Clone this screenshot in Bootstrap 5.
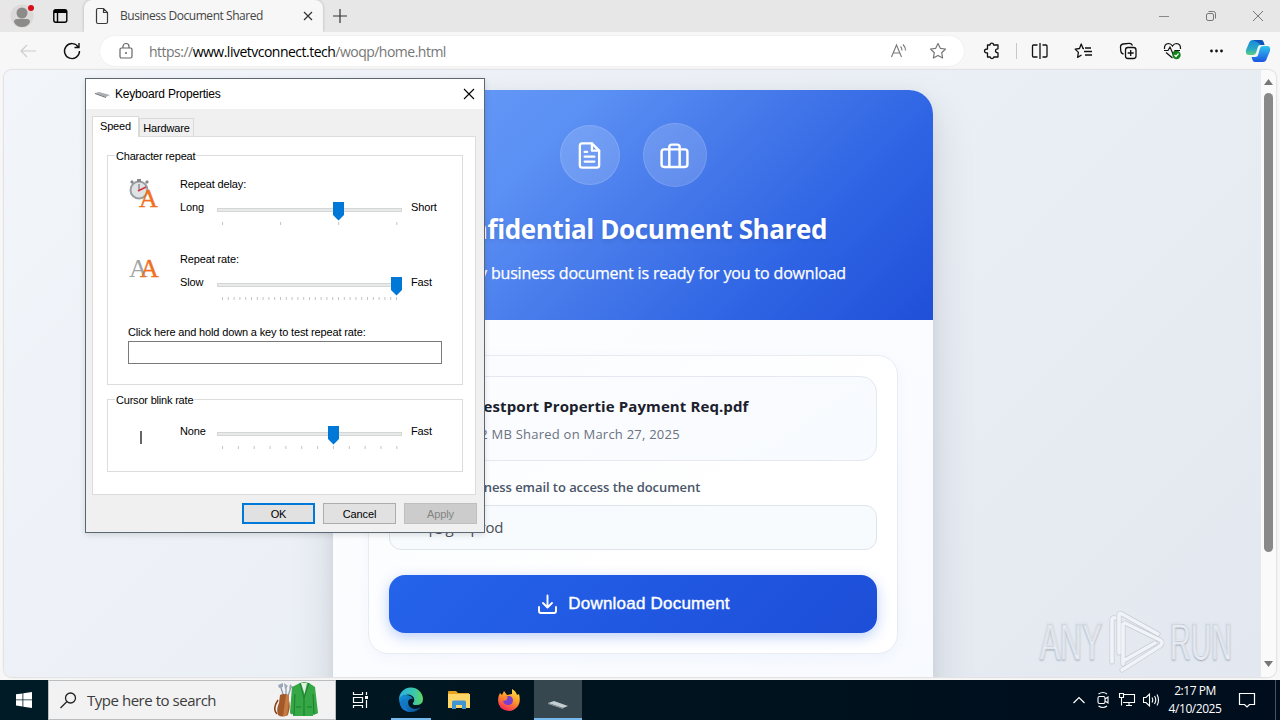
<!DOCTYPE html>
<html lang="en">

<head>
  <meta charset="UTF-8">
  <meta name="viewport" content="width=device-width, initial-scale=1.0">
  <title>Business Document Shared</title>
  <link rel="stylesheet" href="https://cdn.jsdelivr.net/npm/bootstrap@5.3.3/dist/css/bootstrap.min.css" />

  <style>
    body {
      width: 1280px;
      height: 720px;
      font-family: "Open Sans", "Noto Sans", sans-serif;
      background-color: #f7f7f7;
    }

    svg {
      display: block;
      flex: none;
    }

    /* browser chrome */
    .tab-strip {
      height: 32px;
      padding: 0 14px 0 9px;
      background-color: #e7e7e7;
    }

    .page-tab {
      width: 239px;
      height: 32px;
      margin-left: 15px;
      padding: 0 7px 0 9px;
      background-color: #f7f7f7;
      border-radius: 8px 8px 0 0;
      box-shadow: 0 0 3px rgba(0, 0, 0, .25);
      font-size: 12px;
      letter-spacing: -.45px;
      color: #444;
      clip-path: inset(0 -4px 0 -4px);
    }

    .page-tab span {
      margin-left: 7px;
    }

    .toolbar {
      height: 38px;
      padding-left: 18px;
      background-color: #f7f7f7;
    }

    .reload-icon {
      margin: 0 18px 0 24px;
    }

    .address-bar {
      width: 864px;
      height: 30px;
      margin-right: 19px;
      padding: 0 17px 0 18px;
      border-radius: 15px;
      font-size: 14px;
      letter-spacing: -.51px;
      color: #767676;
      box-shadow: 0 0 2px rgba(0, 0, 0, .08);
    }

    .address-bar span {
      margin-left: 15px;
    }

    .address-bar b {
      font-weight: 400;
      color: #000;
    }

    .address-actions {
      gap: 20px;
    }

    .tool-divider {
      width: 1px;
      height: 16px;
      margin: 0 13px 0 15px;
      background-color: #c8c8c8;
    }

    .tool-icons {
      gap: 24.3px;
    }

    .copilot-icon {
      margin-left: 18px;
    }

    /* web page */
    .viewport-frame {
      height: 607px;
      margin: 0 4px 3px 4px;
      border-radius: 8px;
      box-shadow: 0 0 2px rgba(0, 0, 0, .3);
    }

    .page-body {
      background: linear-gradient(135deg, #f2f6fb 0%, #e3e8f0 100%);
      padding: 20px 0 0 1px;
    }

    .share-card {
      width: 600px;
      height: 760px;
      border-radius: 24px;
      background: linear-gradient(145deg, #fff, #f6f9ff);
      box-shadow: 0 20px 45px rgba(30, 41, 59, .14), 0 4px 16px rgba(30, 41, 59, .05);
    }

    .share-head {
      height: 230px;
      padding-top: 33px;
      background: linear-gradient(135deg, #6ba0fa 0%, #5b90f4 32%, #4477e9 55%, #2e64e4 76%, #204fd8 100%);
    }

    .head-icons {
      gap: 23px;
    }

    .head-icon {
      width: 60px;
      height: 60px;
      background-color: rgba(255, 255, 255, .16);
      border: 1px solid rgba(255, 255, 255, .12);
    }

    .head-icon-lg {
      width: 64px;
      height: 64px;
    }

    .share-head h1 {
      font-size: 26px;
      line-height: 36px;
      margin: 24px 0 0;
      letter-spacing: -.38px;
      text-shadow: 0 2px 4px rgba(0, 0, 0, .1);
    }

    .share-head p {
      font-size: 16px;
      line-height: 24px;
      margin: 14px 0 0;
      letter-spacing: -.2px;
      word-spacing: .2px;
      -webkit-text-stroke: .25px #fff;
    }

    .share-form {
      margin: 35px 35px 0;
      height: 299px;
      padding: 20px;
      border: 1px solid #e7ebf2;
      border-radius: 20px;
      background: linear-gradient(145deg, #f9fbff, #fff 60%);
      box-shadow: 0 4px 14px rgba(30, 64, 175, .04);
    }

    .file-box {
      height: 85px;
      padding: 18px 20px 0 79px;
      border: 1px solid #e4e8f0;
      border-radius: 16px;
      background: linear-gradient(145deg, #fcfdff, #f7fafe);
    }

    .file-name {
      font-size: 15px;
      line-height: 22px;
      font-weight: 700;
      letter-spacing: .1px;
      color: #1a202c;
    }

    .file-meta {
      font-size: 13px;
      line-height: 20px;
      margin-top: 7px;
      letter-spacing: .23px;
      color: #6b7280;
    }

    .email-label {
      font-size: 13px;
      line-height: 20px;
      margin: 16px 0 8px;
      font-weight: 600;
      letter-spacing: -.06px;
      color: #4a5568;
    }

    .email-box {
      height: 45px;
      padding: 0 16px;
      border: 1px solid #dfe4ec;
      border-radius: 12px;
      background-color: #f8fbfe;
      font-size: 15px;
      letter-spacing: -.2px;
      color: #4b5058;
    }

    .download-btn {
      height: 58px;
      margin-top: 25px;
      border-radius: 16px;
      border: 0;
      background: linear-gradient(135deg, #2563eb, #1d4ed8);
      box-shadow: 0 4px 14px rgba(37, 99, 235, .3);
      font-family: "Liberation Sans", Arial, sans-serif;
      font-size: 17px;
      letter-spacing: .22px;
      color: #fff;
      -webkit-text-stroke: .4px #fff;
    }

    .scroll-rail {
      width: 15px;
      padding: 8px 0 9px;
      background-color: #fafafa;
    }

    .scroll-thumb {
      width: 9px;
      height: 459px;
      margin-top: 8px;
      border-radius: 5px;
      background-color: #898989;
    }

    .watermark {
      right: 20px;
      top: 605px;
    }

    .watermark text {
      font-family: "Liberation Sans", Arial, sans-serif;
      font-size: 52px;
      fill: #f0f3f8;
      stroke: #e6eaf1;
      stroke-width: 1px;
      text-shadow: 0 1px 2px rgba(120, 130, 150, .6);
    }

    /* keyboard properties window */
    .kb-window {
      left: 85px;
      top: 78px;
      width: 400px;
      height: 455px;
      border: 1px solid #5b6874;
      background-color: #f0f0f0;
      box-shadow: 0 2px 6px rgba(0, 0, 0, .12);
      font-family: "Liberation Sans", Arial, sans-serif;
      font-size: 11px;
      line-height: 14px;
      letter-spacing: -.14px;
      color: #000;
    }

    .kb-title {
      height: 30px;
      padding: 0 9px;
      font-size: 12px;
      letter-spacing: -.2px;
    }

    .kb-tabs {
      height: 27px;
      padding-left: 6px;
    }

    .kb-tab {
      width: 55px;
      height: 18px;
      border: 1px solid #d9d9d9;
      border-bottom: 0;
      background-color: #f0f0f0;
      padding-top: 2px;
    }

    .kb-tab-on {
      width: 47px;
      height: 21px;
      margin-bottom: -1px;
      background-color: #fff;
      position: relative;
    }

    .kb-pane {
      margin: 0 8px 0 6px;
      height: 359px;
      padding: 18px 12px 0 14px;
      border: 1px solid #dcdcdc;
    }

    .kb-group {
      height: 230px;
      border: 1px solid #dcdcdc;
      padding: 0 20px;
    }

    .kb-group-sm {
      height: 73px;
      margin-top: 14px;
    }

    .kb-legend {
      margin: -7px 0 14px -13px;
      padding: 0 1px;
      width: max-content;
      height: 14px;
      letter-spacing: -.2px;
    }

    .kb-icon-col {
      width: 52px;
    }

    .kb-end {
      width: 37px;
      margin-top: 1px;
    }

    .kb-row {
      height: 75px;
    }

    .kb-hint {
      margin: -2px 0 2px;
      letter-spacing: -.15px;
    }

    .kb-input {
      width: 314px;
      height: 23px;
      border: 1px solid #7a7a7a;
    }

    .kb-blink {
      margin-top: 16px;
    }

    .kb-buttons {
      padding: 8px 7px 0 0;
    }

    .kb-btn {
      width: 73px;
      height: 21px;
      border: 1px solid #adadad;
      background-color: #e1e1e1;
    }

    .kb-btn-main {
      border: 2px solid #0078d7;
    }

    .kb-btn-off {
      border-color: #bfbfbf;
      background-color: #ccc;
      color: #838383;
    }

    /* taskbar */
    .taskbar {
      height: 40px;
      background: linear-gradient(90deg, #001b26, #00141f 45%, #000d1d);
    }

    .task-search {
      width: 288px;
      height: 40px;
      padding: 0 15px 0 10px;
      background-color: #f2f2f2;
      border: 1px solid #b9bdc0;
      font-size: 15px;
      letter-spacing: -.47px;
      color: #3c3c3c;
    }

    .task-search span {
      margin-left: 9px;
    }

    .task-slot {
      width: 48px;
      height: 40px;
    }

    .task-fox {
      width: 51px;
    }

    .task-slot-on {
      background-color: #37474f;
      border-bottom: 2px solid #76b9ed;
    }

    .task-running {
      box-shadow: inset 0 -2px #76b9ed;
      width: 40px;
      margin: 0 4px 0 7px;
    }

    .task-tray {
      gap: 7px;
    }

    .task-clock {
      width: 64px;
      margin-left: -4px;
      font-size: 12px;
      line-height: 18px;
      letter-spacing: -.45px;
    }

    .task-notes {
      margin: 0 12px 0 4px;
    }

    .task-peek {
      width: 5px;
      height: 40px;
      border-left: 1px solid #4a525e;
    }
  </style>
</head>

<body class="d-flex flex-column overflow-hidden position-relative m-0">

  <div class="tab-strip d-flex align-items-center">
    <svg width="26" height="26" viewBox="0 0 26 26">
      <circle cx="13" cy="13" r="11.5" fill="#dcdad8" />
      <circle cx="13" cy="10" r="5.5" fill="#8d8b89" />
      <path d="M5 19q0-3 3-3h10q3 0 3 3-2 5-8 5t-8-5z" fill="#8d8b89" />
      <circle cx="22" cy="5" r="3" fill="#d80f1b" />
    </svg>
    <svg class="ms-3" width="18" height="18" viewBox="0 0 18 18" fill="none" stroke="#000" stroke-width="1.4">
      <rect x="2.8" y="2.8" width="13" height="12.5" rx="2" />
      <path d="M6.5 5v10" />
      <path d="M3 4.5h13" stroke-width="3" />
    </svg>
    <div class="page-tab d-flex align-items-center">
      <svg width="20" height="18" viewBox="0 0 20 18" fill="none" stroke="#3b3b3b" stroke-width="1.2">
        <path d="M3.500 3q0-1.500 1.500-1.500h5.500l4 4V15q0 1.500-1.500 1.500H5Q3.500 16.500 3.500 15zM10.500 1.500v4h4" />
      </svg>
      <span>Business Document Shared</span>
      <svg class="ms-auto" width="16" height="16" viewBox="0 0 16 16" stroke="#333" stroke-width="1.2">
        <path d="M4 4l8 8M12 4l-8 8" />
      </svg>
    </div>
    <svg class="ms-2" width="18" height="18" viewBox="0 0 18 18" stroke="#333" stroke-width="1.2">
      <path d="M9 2v14M2 9h14" />
    </svg>
    <div class="d-flex ms-auto align-items-center gap-4">
      <svg width="16" height="16" viewBox="0 0 16 16" stroke="#888"><path d="M3 8.500h10" /></svg>
      <svg class="mx-2" width="14" height="14" viewBox="0 0 14 14" fill="none" stroke="#777">
        <rect x="2.500" y="4.500" width="7" height="7" rx="1.5" />
        <path d="M4.500 2.500h5q2 0 2 2v5" />
      </svg>
      <svg width="16" height="16" viewBox="0 0 16 16" stroke="#777"><path d="M3 3l10 10M13 3L3 13" /></svg>
    </div>
  </div>

  <div class="toolbar d-flex align-items-center">
    <svg width="20" height="16" viewBox="0 0 20 16" fill="none" stroke="#ccc" stroke-width="1.2">
      <path d="M18 8H3M9 2L3 8l6 6" />
    </svg>
    <svg class="reload-icon" width="20" height="20" viewBox="0 0 20 20" fill="none" stroke="#111" stroke-width="1.4">
      <path d="M16.300 6A7.500 7.500 0 1 0 17.500 10M17 2v4.500h-4.500" />
    </svg>
    <div class="address-bar bg-white d-flex align-items-center">
      <svg width="16" height="18" viewBox="0 0 16 18" fill="none" stroke="#666" stroke-width="1.2">
        <rect x="2" y="6" width="12" height="10" rx="1.5" />
        <path d="M5 6V4.500a3 3 0 0 1 6 0V6" />
        <circle cx="8" cy="11" r="1" fill="#666" stroke="none" />
      </svg>
      <span>https://<b>www.livetvconnect.tech</b>/woqp/home.html</span>
      <div class="address-actions d-flex ms-auto">
        <svg width="20" height="18" viewBox="0 0 20 18" fill="none" stroke="#777" stroke-width="1.1">
          <path d="M2.500 15L7.500 3l5 12M4.300 11h6.400M11.500 4.500q1.500 1.500 1.500 4M14 2.500q2.500 2.500 2.500 6" />
        </svg>
        <svg width="18" height="18" viewBox="0 0 18 18" fill="none" stroke="#777" stroke-width="1.2" stroke-linejoin="round">
          <path d="M9 1.500l2.300 4.800 5.200.7-3.800 3.700.9 5.300L9 13.500 4.400 16l.9-5.300L1.500 7l5.200-.7z" />
        </svg>
      </div>
    </div>
    <svg width="18" height="18" viewBox="0 0 18 18" fill="none" stroke="#111" stroke-width="1.3" stroke-linejoin="round">
      <path d="M4.500 3h2.500q0-1.800 1.800-1.800T10.600 3H15v3.800q-2.500 0-2.500 2t2.500 2V15h-4.200q0 1.500-1.800 1.500T7.200 15H4.500v-4Q1.500 11 1.500 9t3-2z" />
    </svg>
    <div class="tool-divider"></div>
    <div class="tool-icons d-flex align-items-center">
      <svg width="20" height="18" viewBox="0 0 20 18" fill="none" stroke="#111" stroke-width="1.3">
        <path d="M7.500 3H3.500Q2.500 3 2.500 4v10q0 1 1 1h4M12.500 3H16q1 0 1 1v10q0 1-1 1h-3.500M10 1v16" />
      </svg>
      <svg width="20" height="18" viewBox="0 0 20 18" fill="none" stroke="#111" stroke-width="1.3" stroke-linejoin="round">
        <path d="M10 6.500H9L7.200 2 5.500 6.500l-4.300.6 3.200 3.300-.8 5 3.900-2.400M11 6h6M10 9.500h8M11 13h7" />
      </svg>
      <svg width="20" height="18" viewBox="0 0 20 18" fill="none" stroke="#111" stroke-width="1.3">
        <rect x="6.500" y="5.500" width="10.500" height="11" rx="2.5" />
        <path d="M11.700 8v6M8.700 11h6M4.500 12Q2 11.500 1.800 9L1.500 5Q1.500 2.500 4 2l6-.6q2.500-.2 3.500 2" />
      </svg>
      <svg width="20" height="20" viewBox="0 0 20 20" fill="none" stroke="#111" stroke-width="1.2">
        <path d="M1.500 8Q1 3 5.500 2.500 8 2.500 9.500 5 11 2.500 13.500 2.500 18 3 17.500 8M1 9.500h4L7 6l3 7 2-3.500h5M3 11.500l6.500 5.500" />
        <circle cx="13.500" cy="14" r="4.2" fill="#11821a" stroke="none" />
        <path d="M11.500 14l1.500 1.500 2.500-3" stroke="#fff" />
      </svg>
      <svg width="20" height="6" viewBox="0 0 20 6" fill="#111">
        <circle cx="4.500" cy="3" r="1.4" /><circle cx="9.500" cy="3" r="1.4" /><circle cx="14.500" cy="3" r="1.4" />
      </svg>
    </div>
    <svg class="copilot-icon" width="26" height="24" viewBox="0 0 26 24">
      <defs>
        <linearGradient id="pilotA" x1="0" y1="0" x2="0" y2="1"><stop stop-color="#1689d8" /><stop offset=".6" stop-color="#28a9c7" /><stop offset="1" stop-color="#5ecf7a" /></linearGradient>
        <linearGradient id="pilotB" x1="0" y1="0" x2="0" y2="1"><stop stop-color="#31c5ee" /><stop offset="1" stop-color="#1a56e0" /></linearGradient>
      </defs>
      <path d="M8 1h8q2 0 2.500 2l1 3h-4q-2 0-2.600 2L11 14q-.7 2-3 2H4Q0 16 1 11L4 4Q5 1 8 1z" fill="url(#pilotA)" />
      <path d="M18 23h-8q-2 0-2.500-2l-1-3h4q2 0 2.600-2L15 9q.7-2 3-2h4q4 0 3 5l-3 7q-1 4-4 4z" fill="url(#pilotB)" />
      <path d="M8 1h8q2 0 2.500 2l1 3h-3q-2 0-2.500-2z" fill="#1053b8" />
    </svg>
  </div>

  <div class="viewport-frame d-flex overflow-hidden">
    <div class="page-body flex-grow-1 d-flex justify-content-center align-items-start overflow-hidden">
      <div class="share-card overflow-hidden flex-shrink-0">
        <div class="share-head text-center text-white">
          <div class="head-icons d-flex justify-content-center align-items-center">
            <div class="head-icon rounded-circle d-flex align-items-center justify-content-center">
              <svg width="29" height="29" viewBox="0 0 24 24" fill="none" stroke="#fff" stroke-width="1.9" stroke-linecap="round" stroke-linejoin="round">
                <path d="M14 2H6a2 2 0 0 0-2 2v16a2 2 0 0 0 2 2h12a2 2 0 0 0 2-2V8z" />
                <path d="M14 2v6h6M16 13H8M16 17H8M10 9H8" />
              </svg>
            </div>
            <div class="head-icon head-icon-lg rounded-circle d-flex align-items-center justify-content-center">
              <svg width="31" height="29" viewBox="0 0 24 24" preserveAspectRatio="none" fill="none" stroke="#fff" stroke-width="1.9" stroke-linecap="round" stroke-linejoin="round">
                <rect x="2" y="7" width="20" height="14.5" rx="2" />
                <path d="M16 21V5a2 2 0 0 0-2-2h-4a2 2 0 0 0-2 2V21" />
              </svg>
            </div>
          </div>
          <h1 class="fw-bold">Confidential Document Shared</h1>
          <p>A priority business document is ready for you to download</p>
        </div>
        <div class="share-form">
          <div class="file-box">
            <div class="file-name text-nowrap">Westport Propertie Payment Req.pdf</div>
            <div class="file-meta text-nowrap">2.2 MB Shared on March 27, 2025</div>
          </div>
          <div class="email-label text-nowrap">Enter your business email to access the document</div>
          <div class="email-box d-flex align-items-center">enq@gdaprod</div>
          <button class="download-btn w-100 d-flex align-items-center justify-content-center gap-2">
            <svg width="24" height="24" viewBox="0 0 24 24" fill="none" stroke="#fff" stroke-width="1.9" stroke-linecap="round" stroke-linejoin="round">
              <path d="M3 15v4a2 2 0 0 0 2 2h13a2 2 0 0 0 2-2v-4M7 11l4.500 4.500 4.500-4.500M11.500 3.500V15" />
            </svg>
            <span>Download Document</span>
          </button>
        </div>
      </div>
    </div>
    <div class="scroll-rail d-flex flex-column align-items-center">
      <svg width="9" height="7" viewBox="0 0 9 7"><path d="M0 7L4.500 1 9 7z" fill="#777" /></svg>
      <div class="scroll-thumb"></div>
      <svg class="mt-auto" width="9" height="7" viewBox="0 0 9 7"><path d="M0 0l4.500 6L9 0z" fill="#777" /></svg>
    </div>
  </div>

  <div class="taskbar d-flex align-items-center text-white">
    <div class="task-slot d-flex align-items-center justify-content-center">
      <svg width="16" height="16" viewBox="0 0 16 16" fill="#fff">
        <path d="M0 2.300l6.500-.9v6.100H0zM7.300 1.300L16 0v7.500H7.300zM0 8.300h6.500v6.200L0 13.600zM7.300 8.300H16V16l-8.700-1.300z" />
      </svg>
    </div>
    <div class="task-search d-flex align-items-center">
      <svg width="19" height="19" viewBox="0 0 19 19" fill="none" stroke="#222" stroke-width="1.3">
        <circle cx="11.500" cy="7" r="5" /><path d="M8 10.500L1.500 17" />
      </svg>
      <span>Type here to search</span>
      <svg class="ms-auto" width="46" height="38" viewBox="0 0 46 38">
        <path d="M10 16L6 4M12 16V5M14 15l3-9" stroke="#8794a3" stroke-width="1.2" />
        <path d="M4 4l5-2v4l-4 1zM10 2l4 3-3 3zM16 3l3 3-4 2z" fill="#9da8b6" />
        <path d="M6 14q3-2 9 0v6q2 4-1 14-6 3-10 0-2-6 1-12z" fill="#a35a2a" />
        <path d="M12 14h3v6l-2 15h-4z" fill="#c67b42" />
        <path d="M4 19q-6 9-1 14" fill="none" stroke="#8a4218" stroke-width="1.5" />
        <path d="M26 2l4-1 5 1 6 4 3 26q-2 2-5 1v2H19v-2q-3 1-3-2l2-25z" fill="#35a845" />
        <path d="M27 2h6l-2.500 11z" fill="#e3efe3" />
        <path d="M26 2l4 15 5-15M30 17v18M21 13l-1 21M39 13l1 21M22 26h5M33 26h5" fill="none" stroke="#1d7d33" />
      </svg>
    </div>
    <div class="task-slot d-flex align-items-center justify-content-center">
      <svg width="18" height="18" viewBox="0 0 18 18" fill="none" stroke="#fff" stroke-width="1.2">
        <path d="M2.500 1v2.500h9V1M2.500 17v-2.500h9V17M2.500 6.500h9v5h-9zM15.500 1v3M15.500 9v8" />
        <path d="M14 5h3v3h-3z" fill="#fff" stroke="none" />
      </svg>
    </div>
    <div class="task-slot task-running d-flex align-items-center justify-content-center">
      <svg width="26" height="26" viewBox="0 0 26 26">
        <defs>
          <linearGradient id="edgeTop"><stop stop-color="#2daee2" /><stop offset=".6" stop-color="#38c7b0" /><stop offset="1" stop-color="#61d65e" /></linearGradient>
          <linearGradient id="edgeLow" x1="0" y1="0" x2="1" y2="1"><stop stop-color="#1596dc" /><stop offset="1" stop-color="#0c4d93" /></linearGradient>
        </defs>
        <path d="M1 13A12 12 0 0 1 25 12q0 6-7 6-4 0-3-2 2-2 1-5-3-5-9-3-4 1-6 5z" fill="url(#edgeTop)" />
        <path d="M1 13q1-5 7-5 5 0 7 4-4-1-5 3 0 6 7 7 3 0 6-2-4 5-10 5Q2 24 1 13z" fill="url(#edgeLow)" />
        <path d="M7 12q-3 9 6 13-9 0-11-8 1-4 5-5z" fill="#1477c9" />
      </svg>
    </div>
    <div class="task-slot d-flex align-items-center justify-content-center">
      <svg width="24" height="22" viewBox="0 0 24 22">
        <path d="M1 3q0-1 1-1h7l2 2h11v4H1z" fill="#e5a323" />
        <path d="M1 5h22v14H1z" fill="#ffd768" />
        <path d="M5 20v-7q0-1.500 1.500-1.500h11Q19 11.500 19 13v7h-4v-4H9v4z" fill="#3f96d2" />
      </svg>
    </div>
    <div class="task-slot task-fox d-flex align-items-center justify-content-center">
      <svg width="24" height="24" viewBox="0 0 24 24">
        <defs>
          <linearGradient id="foxBody" x1=".8" y1="0" x2=".3" y2="1"><stop stop-color="#ffe14a" /><stop offset=".45" stop-color="#ff9a26" /><stop offset="1" stop-color="#f5245c" /></linearGradient>
        </defs>
        <path d="M3 5l2 2 2-4 3 4 5-1V1q4 2 5 6l2-1q2 8-1 12-4 5-9 5Q1 22 1 12q0-4 2-7z" fill="url(#foxBody)" />
        <path d="M8 9q7-3 8 3 0 5-5 5-4 0-5-4l4-1q0-2-2-3z" fill="#7b3fd0" />
        <path d="M6 8q4-1 5 2-3 0-3 2z" fill="#ff8a2a" />
      </svg>
    </div>
    <div class="task-slot task-slot-on d-flex align-items-end pb-2 justify-content-center">
      <svg width="24" height="10" viewBox="0 0 24 10">
        <path d="M2 3l6-2 14 5-5 2z" fill="#c5ced3" /><path d="M2 3l15 5v1L2 4z" fill="#8d989e" />
      </svg>
    </div>

    <div class="task-tray d-flex align-items-center ms-auto">
      <svg width="14" height="14" viewBox="0 0 14 14" fill="none" stroke="#fff" stroke-width="1.2"><path d="M1.500 10L7 4.500l5.500 5.500" /></svg>
      <svg width="18" height="18" viewBox="0 0 18 18" fill="none" stroke="#fff" stroke-width="1.1">
        <rect x="5" y="5.500" width="7" height="7" rx="1.5" /><path d="M12 8l3-2v6l-3-2M5.500 3Q10 0 14 3M5.500 15q4.500 3 8.500 0" />
      </svg>
      <svg width="18" height="16" viewBox="0 0 18 16" fill="none" stroke="#fff" stroke-width="1.1">
        <path d="M6 2.500h10.500v8H5M8 13.500h6M11 10.500v3M1.500 1.500h4v4h-4zM3.500 5.500v8" />
      </svg>
      <svg width="17" height="16" viewBox="1 0 17 16" fill="none" stroke="#fff" stroke-width="1.1">
        <path d="M1.500 5.500h2.500L7.500 2v12L4 10.500H1.500zM10 5.500q1.500 2.500 0 5M12.500 4q2.500 4 0 8M15 2.500q3 5.500 0 11" />
      </svg>
      <div class="task-clock text-center">2:17 PM<br>4/10/2025</div>
      <svg class="task-notes" width="18" height="18" viewBox="0 0 18 18" fill="none" stroke="#fff" stroke-width="1.2">
        <path d="M1.500 2.500h15v11h-5L9 16l-2.500-2.500h-5z" />
      </svg>
      <div class="task-peek"></div>
    </div>
  </div>

  <svg class="watermark position-absolute" width="224" height="76" viewBox="0 0 224 76">
    <text x="4" y="54" textLength="62" lengthAdjust="spacingAndGlyphs">ANY</text>
    <text x="134" y="54" textLength="62" lengthAdjust="spacingAndGlyphs">RUN</text>
    <g fill="none" stroke-linecap="round" stroke-linejoin="round">
      <path d="M76 57V15q0-3 3-2M83 48V10q0-3 3-1l36 20M86 65l38-24q4-3 0-6L89 18M87 59V19M89 55l30-17" stroke="#c6ccd6" stroke-width="5" />
      <path d="M76 57V15q0-3 3-2M83 48V10q0-3 3-1l36 20M86 65l38-24q4-3 0-6L89 18M87 59V19M89 55l30-17" stroke="#f0f3f8" stroke-width="3.6" />
    </g>
  </svg>

  <div class="kb-window position-absolute">
    <div class="kb-title bg-white d-flex align-items-center">
      <svg class="me-1" width="16" height="8" viewBox="0 0 16 8"><path d="M0 3l4-1 11 3-4 2z" fill="#a9aeb0" /><path d="M0 3l11 4v1L0 4z" fill="#6b6f72" /></svg>
      <span>Keyboard Properties</span>
      <svg class="ms-auto" width="12" height="12" viewBox="0 0 12 12" stroke="#000" stroke-width="1.1"><path d="M1 1l10 10M11 1L1 11" /></svg>
    </div>
    <div class="kb-tabs d-flex align-items-end">
      <div class="kb-tab kb-tab-on text-center">Speed</div>
      <div class="kb-tab text-center">Hardware</div>
    </div>
    <div class="kb-pane bg-white">
      <div class="kb-group">
        <div class="kb-legend bg-white">Character repeat</div>
        <div class="kb-row d-flex">
          <div class="kb-icon-col">
            <svg width="36" height="38" viewBox="0 0 36 38">
              <circle cx="11" cy="13" r="8.500" fill="#dfe3e5" stroke="#9a9ea1" stroke-width="2" />
              <path d="M9 2h4v3H9zM2 5l2-2 2 2-2 2zM17 5l2-2 2 2-2 2z" fill="#85898c" />
              <path d="M11 7v6" stroke="#666" /><path d="M10 14l8-4" stroke="#d2303c" stroke-width="1.4" />
              <text x="11" y="30" font-family="Liberation Serif, serif" font-size="26" fill="#f07020" stroke="#f07020" stroke-width=".4">A</text>
            </svg>
          </div>
          <div>
            <div>Repeat delay:</div>
            <div class="d-flex pt-2">
              <div class="kb-end">Long</div>
              <svg width="186" height="28" viewBox="0 0 186 28">
                <rect x=".5" y="9.500" width="184" height="3" fill="#e7eaea" stroke="#d6d6d6" />
                <path d="M5 24.500h176" stroke="#c4c4c4" stroke-width="3" stroke-dasharray="1 57.1" />
                <path d="M116 3h11v13l-5.500 5.500L116 16z" fill="#0078d7" />
              </svg>
              <div class="kb-end ps-2">Short</div>
            </div>
          </div>
        </div>
        <div class="kb-row d-flex">
          <div class="kb-icon-col">
            <svg width="36" height="34" viewBox="0 0 36 34" font-family="Liberation Serif, serif" font-size="26">
              <text x="1" y="25" fill="#a0a4a7">A</text>
              <text x="12" y="25" fill="#f07020" stroke="#f07020" stroke-width=".4">A</text>
            </svg>
          </div>
          <div>
            <div>Repeat rate:</div>
            <div class="d-flex pt-2">
              <div class="kb-end">Slow</div>
              <svg width="186" height="28" viewBox="0 0 186 28">
                <rect x=".5" y="9.500" width="184" height="3" fill="#e7eaea" stroke="#d6d6d6" />
                <path d="M5 24.500h176" stroke="#c4c4c4" stroke-width="3" stroke-dasharray="1 4.8" />
                <path d="M174 3h11v13l-5.500 5.500L174 16z" fill="#0078d7" />
              </svg>
              <div class="kb-end ps-2">Fast</div>
            </div>
          </div>
        </div>
        <div class="kb-hint">Click here and hold down a key to test repeat rate:</div>
        <div class="kb-input"></div>
      </div>
      <div class="kb-group kb-group-sm">
        <div class="kb-legend bg-white">Cursor blink rate</div>
        <div class="kb-blink d-flex">
          <div class="kb-icon-col">
            <svg width="32" height="28" viewBox="0 0 32 28"><path d="M13 8v13" stroke="#666" stroke-width="2" /></svg>
          </div>
          <div class="kb-end">None</div>
          <svg width="186" height="28" viewBox="0 0 186 28">
            <rect x=".5" y="9.500" width="184" height="3" fill="#e7eaea" stroke="#d6d6d6" />
            <path d="M5 24.500h176" stroke="#c4c4c4" stroke-width="3" stroke-dasharray="1 14.85" />
            <path d="M111 3h11v13l-5.500 5.500L111 16z" fill="#0078d7" />
          </svg>
          <div class="kb-end ps-2">Fast</div>
        </div>
      </div>
    </div>
    <div class="kb-buttons d-flex justify-content-end gap-2">
      <div class="kb-btn kb-btn-main d-flex align-items-center justify-content-center">OK</div>
      <div class="kb-btn d-flex align-items-center justify-content-center">Cancel</div>
      <div class="kb-btn kb-btn-off d-flex align-items-center justify-content-center">Apply</div>
    </div>
  </div>

  <script src="https://cdn.jsdelivr.net/npm/bootstrap@5.3.3/dist/js/bootstrap.bundle.min.js"></script>
</body>

</html>
